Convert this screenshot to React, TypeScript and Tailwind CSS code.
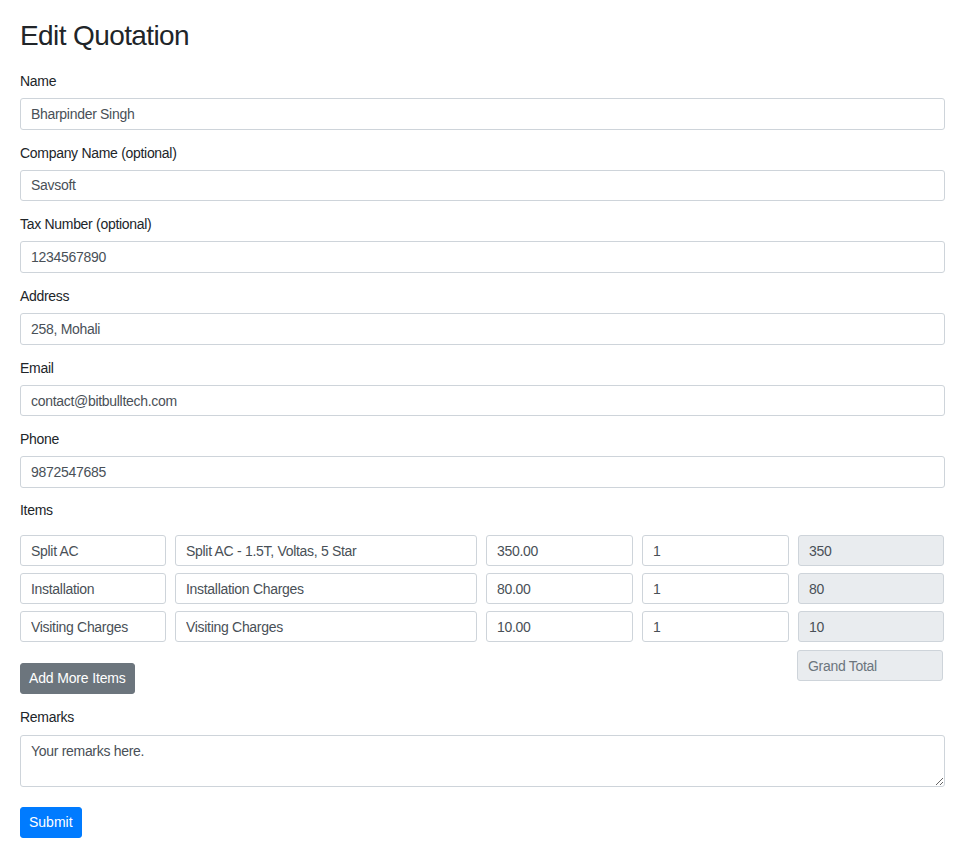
import React from "react";

const font = { fontFamily: "'Liberation Sans', Arial, sans-serif" };

type Field = { label: string; value: string };

const fields: Field[] = [
  { label: "Name", value: "Bharpinder Singh" },
  { label: "Company Name (optional)", value: "Savsoft" },
  { label: "Tax Number (optional)", value: "1234567890" },
  { label: "Address", value: "258, Mohali" },
  { label: "Email", value: "contact@bitbulltech.com" },
  { label: "Phone", value: "9872547685" },
];

const items = [
  { name: "Split AC", desc: "Split AC - 1.5T, Voltas, 5 Star", price: "350.00", qty: "1", total: "350" },
  { name: "Installation", desc: "Installation Charges", price: "80.00", qty: "1", total: "80" },
  { name: "Visiting Charges", desc: "Visiting Charges", price: "10.00", qty: "1", total: "10" },
];

const inputCls =
  "block rounded-[3px] border border-[#ced4da] bg-white px-[10px] text-[14px] tracking-[-0.3px] text-[#495057] outline-none";
const readOnlyCls =
  "block h-[31px] rounded-[3px] border border-[#ced4da] bg-[#e9ecef] px-[10px] text-[14px] tracking-[-0.3px] text-[#495057] outline-none";
const labelCls = "block text-[14px] tracking-[-0.3px] leading-[21px]";

export default function App() {
  return (
    <div className="min-h-screen bg-white text-[#212529]" style={font}>
      <div className="w-[925px] pl-[20px] pt-[19px] box-content">
        <h1 className="text-[28px] tracking-[-0.6px] font-normal leading-[34px] mb-[18px]">Edit Quotation</h1>

        <form onSubmit={(e) => e.preventDefault()}>
          {fields.map((f) => (
            <div key={f.label} className="mb-[13.2px]">
              <label className={labelCls + " mb-[6px]"}>{f.label}</label>
              <input className={inputCls + " w-full h-[31.5px]"} defaultValue={f.value} />
            </div>
          ))}

          {/* items */}
          <label className={labelCls + " -mt-[1px] mb-[14px]"}>Items</label>
          <div className="flex flex-col gap-[7px]">
            {items.map((it) => (
              <div key={it.name} className="flex gap-[9px]">
                <input className={inputCls + " h-[31px] w-[146px]"} defaultValue={it.name} />
                <input className={inputCls + " h-[31px] w-[302px]"} defaultValue={it.desc} />
                <input className={inputCls + " h-[31px] w-[147px]"} defaultValue={it.price} />
                <input className={inputCls + " h-[31px] w-[147px]"} defaultValue={it.qty} />
                <input className={readOnlyCls + " w-[146px]"} defaultValue={it.total} readOnly />
              </div>
            ))}
          </div>
          <div className="flex justify-between items-start w-[923px] mt-[8px]">
            <button
              type="button"
              className="mt-[13px] h-[31px] px-[8px] border border-[#6c757d] rounded-[3px] bg-[#6c757d] text-white text-[14px] tracking-[-0.15px]"
            >
              Add More Items
            </button>
            <input
              className={readOnlyCls + " w-[146px] placeholder:text-[#6c757d]"}
              placeholder="Grand Total"
              readOnly
            />
          </div>

          <div className="mt-[12.5px]">
            <label className={labelCls + " mb-[7.5px]"}>Remarks</label>
            <textarea
              className="block w-full h-[52px] rounded-[3px] border border-[#ced4da] bg-white px-[10px] py-[5px] text-[14px] tracking-[-0.3px] leading-[21px] text-[#495057] outline-none"
              defaultValue="Your remarks here."
            />
          </div>

          <button
            type="submit"
            className="mt-[20px] h-[31px] px-[8px] border border-[#007bff] rounded-[3px] bg-[#007bff] text-white text-[14px]"
          >
            Submit
          </button>
        </form>
      </div>
    </div>
  );
}
